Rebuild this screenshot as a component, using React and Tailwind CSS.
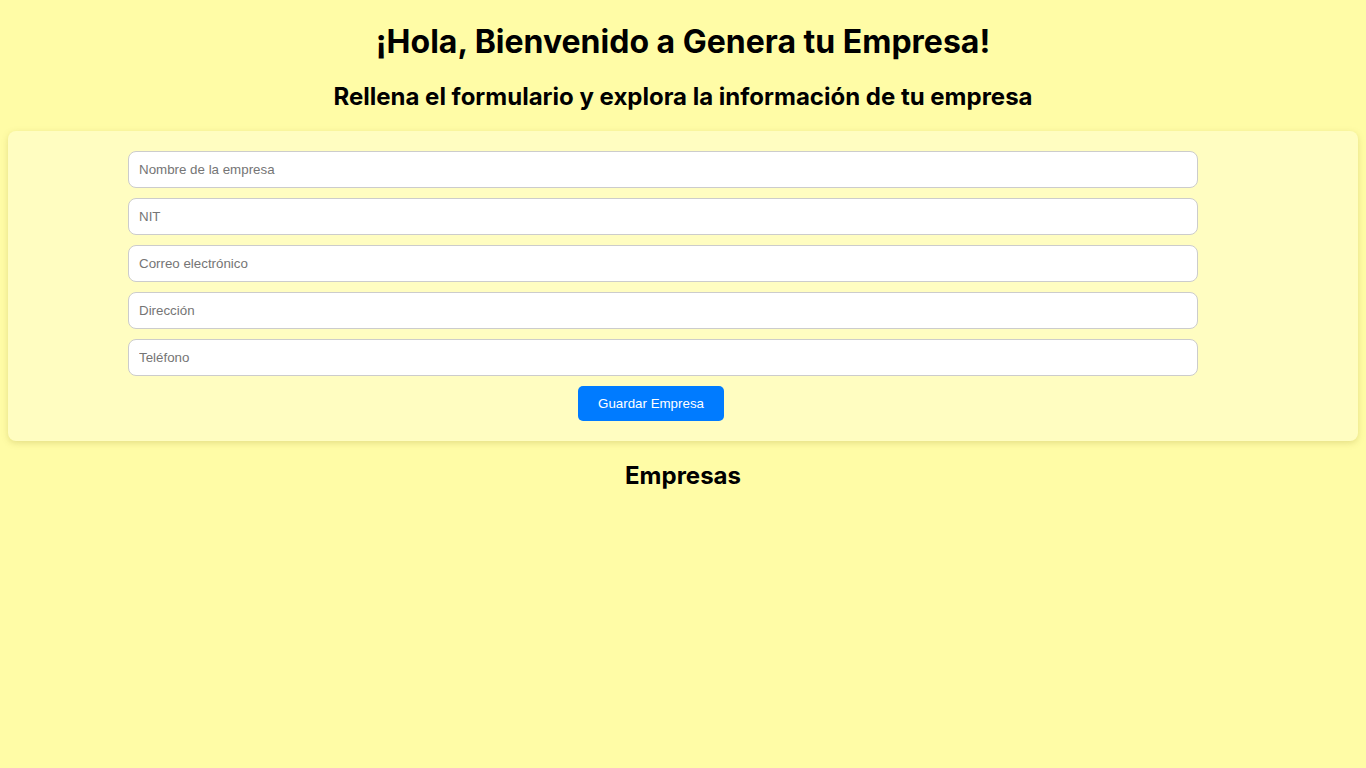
const fields = ['Nombre de la empresa', 'NIT', 'Correo electrónico', 'Dirección', 'Teléfono'];

export default function App() {
  return (
    <div className="min-h-screen bg-[#fffca6] px-2 pt-[22px] font-['Inter',sans-serif] text-black">
      <h1 className="text-center text-[32px] font-bold leading-[39px]">¡Hola, Bienvenido a Genera tu Empresa!</h1>
      <h2 className="mt-[21px] text-center text-[24px] font-bold leading-[29px]">
        Rellena el formulario y explora la información de tu empresa
      </h2>

      {/* Form card */}
      <div className="mt-[20px] rounded-lg bg-[#fffdc1] py-5 shadow-[0_2px_6px_rgba(150,140,40,0.25)]">
        <form className="flex flex-col gap-[10px] font-['Liberation_Sans',Arial,sans-serif]">
          {fields.map((f) => (
            <input
              key={f}
              type="text"
              placeholder={f}
              className="ml-[120px] h-[37px] w-[1070px] rounded-lg border border-[#cccccc] bg-white px-[10px] text-[13.33px] text-black placeholder:text-[#757575] outline-none"
            />
          ))}
          <button
            type="button"
            className="ml-[570px] h-[35px] w-[146px] rounded-[5px] bg-[#007bff] text-[13.33px] text-white"
          >
            Guardar Empresa
          </button>
        </form>
      </div>

      <h2 className="mt-[20px] text-center text-[24px] font-bold leading-[29px]">Empresas</h2>
    </div>
  );
}
